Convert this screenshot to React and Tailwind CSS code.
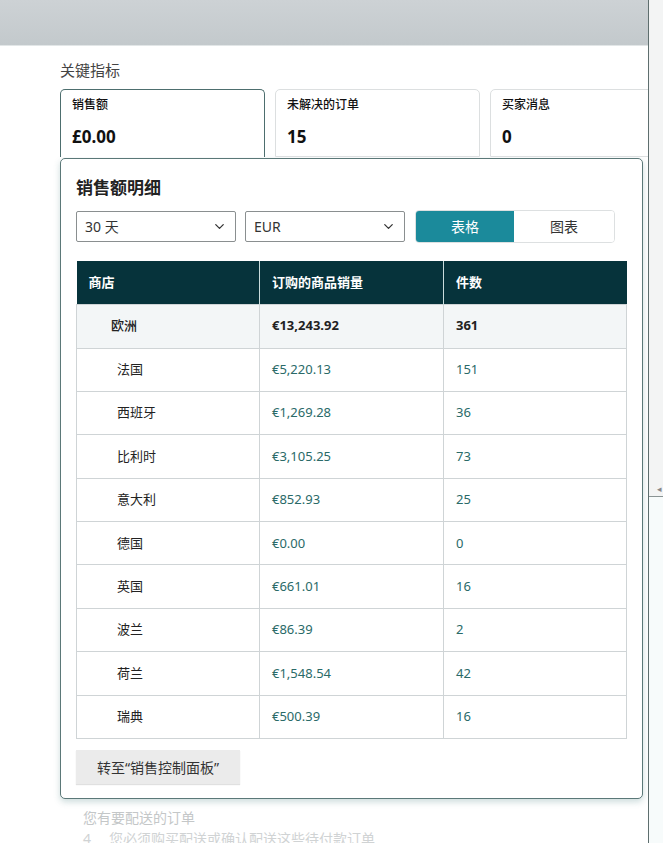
import { ChevronDown } from "lucide-react";

const rows = [
  { name: "法国", amount: "€5,220.13", count: "151" },
  { name: "西班牙", amount: "€1,269.28", count: "36" },
  { name: "比利时", amount: "€3,105.25", count: "73" },
  { name: "意大利", amount: "€852.93", count: "25" },
  { name: "德国", amount: "€0.00", count: "0" },
  { name: "英国", amount: "€661.01", count: "16" },
  { name: "波兰", amount: "€86.39", count: "2" },
  { name: "荷兰", amount: "€1,548.54", count: "42" },
  { name: "瑞典", amount: "€500.39", count: "16" },
];

const font = { fontFamily: '"Noto Sans", "Noto Sans CJK SC", sans-serif' };

const Select = ({ label }) => (
  <div className="w-[160px] h-[31px] flex items-center justify-between pl-[8px] pr-[8px] border border-[#8a8f90] rounded-[2px] bg-white text-[14px] text-[#333]">
    <span>{label}</span>
    <ChevronDown size={15} strokeWidth={2} className="text-[#333]" />
  </div>
);

const Card = ({ title, value, active }) => (
  <div
    className={`h-[68px] shrink-0 w-[205px] rounded-t-[5px] border px-[11px] pt-[6px] bg-white ${
      active ? "border-[#4d6e6e] border-b-0" : "border-[#dcdfe0]"
    }`}
  >
    <div className="text-[12px] font-medium text-[#111]">{title}</div>
    <div className="mt-[10px] text-[17px] font-bold text-[#111]">{value}</div>
  </div>
);

export default function App() {
  return (
    <div style={font} className="w-[663px] h-[843px] overflow-hidden flex bg-white">
      <div className="w-[648px] shrink-0 flex flex-col overflow-hidden">
        <div className="h-[46px] shrink-0 bg-gradient-to-b from-[#cdd2d5] to-[#c3c9cc] border-b border-[#e2e6e7]" />
        <div className="pl-[60px] pt-[13px]">
          <div className="text-[15px] text-[#444]">关键指标</div>
          <div className="mt-[7px] flex gap-[10px]">
            <Card title="销售额" value="£0.00" active />
            <Card title="未解决的订单" value="15" />
            <Card title="买家消息" value="0" />
          </div>
          <div className="w-[583px] mt-[1px] border border-[#5b7878] rounded-[5px] bg-white shadow-[0_3px_6px_rgba(60,120,120,0.25)] px-[15px] pt-[16px] pb-[14px]">
            <div className="text-[17px] font-bold text-[#222]">销售额明细</div>
            <div className="mt-[10px] flex items-center">
              <Select label="30 天" />
              <div className="w-[9px]" />
              <Select label="EUR" />
              <div className="ml-[10px] flex h-[33px] rounded-[4px] border border-[#dde0e1] overflow-hidden">
                <div className="w-[98px] flex items-center justify-center bg-[#1b8a9b] text-white text-[14px]">表格</div>
                <div className="w-[100px] flex items-center justify-center bg-white text-[#333] text-[14px]">图表</div>
              </div>
            </div>
            <table className="mt-[18px] w-[551px] border-collapse text-[13px] table-fixed">
              <thead>
                <tr className="h-[43px] bg-[#06333b] text-white font-bold">
                  <th className="w-[183px] text-left pl-[12px] border-r border-[#c9dcdc]">商店</th>
                  <th className="w-[184px] text-left pl-[12px] border-r border-[#c9dcdc]">订购的商品销量</th>
                  <th className="text-left pl-[12px]">件数</th>
                </tr>
              </thead>
              <tbody>
                <tr className="h-[44px] bg-[#f3f6f7] font-bold text-[#222]">
                  <td className="pl-[34px] border border-[#cfd4d6] font-medium">欧洲</td>
                  <td className="pl-[12px] border border-[#cfd4d6]">€13,243.92</td>
                  <td className="pl-[12px] border border-[#cfd4d6]">361</td>
                </tr>
                {rows.map((r) => (
                  <tr key={r.name} className="h-[43.4px]">
                    <td className="pl-[40px] border border-[#cfd4d6] text-[#222]">{r.name}</td>
                    <td className="pl-[12px] border border-[#cfd4d6] text-[#2a6a68]">{r.amount}</td>
                    <td className="pl-[12px] border border-[#cfd4d6] text-[#2a6a68]">{r.count}</td>
                  </tr>
                ))}
              </tbody>
            </table>
            <button className="mt-[11px] w-[164px] h-[34px] bg-[#ebebeb] shadow-[0_1px_1px_rgba(0,0,0,0.12)] text-[14px] text-[#333]">
              转至“销售控制面板”
            </button>
          </div>
          <div className="pl-[23px] pt-[8px] text-[14px] text-[#c4c7c8]">您有要配送的订单</div>
          <div className="pl-[23px] mt-[1px] text-[14px] leading-[20px] text-[#d0d3d4] flex gap-[18px]">
            <span>4</span>
            <span>您必须购买配送或确认配送这些待付款订单</span>
          </div>
        </div>
      </div>
      <div className="w-[15px] shrink-0 border-l border-[#5e6e6e] flex flex-col">
        <div className="h-[497px] bg-[#f3f4f4] border-b border-[#8a9494] flex flex-col justify-end items-end pb-[3px]">
          <span className="text-[9px] leading-none text-[#888] pr-[1px]">◂</span>
        </div>
        <div className="flex-1 bg-[#f7fbfb]" />
      </div>
    </div>
  );
}
